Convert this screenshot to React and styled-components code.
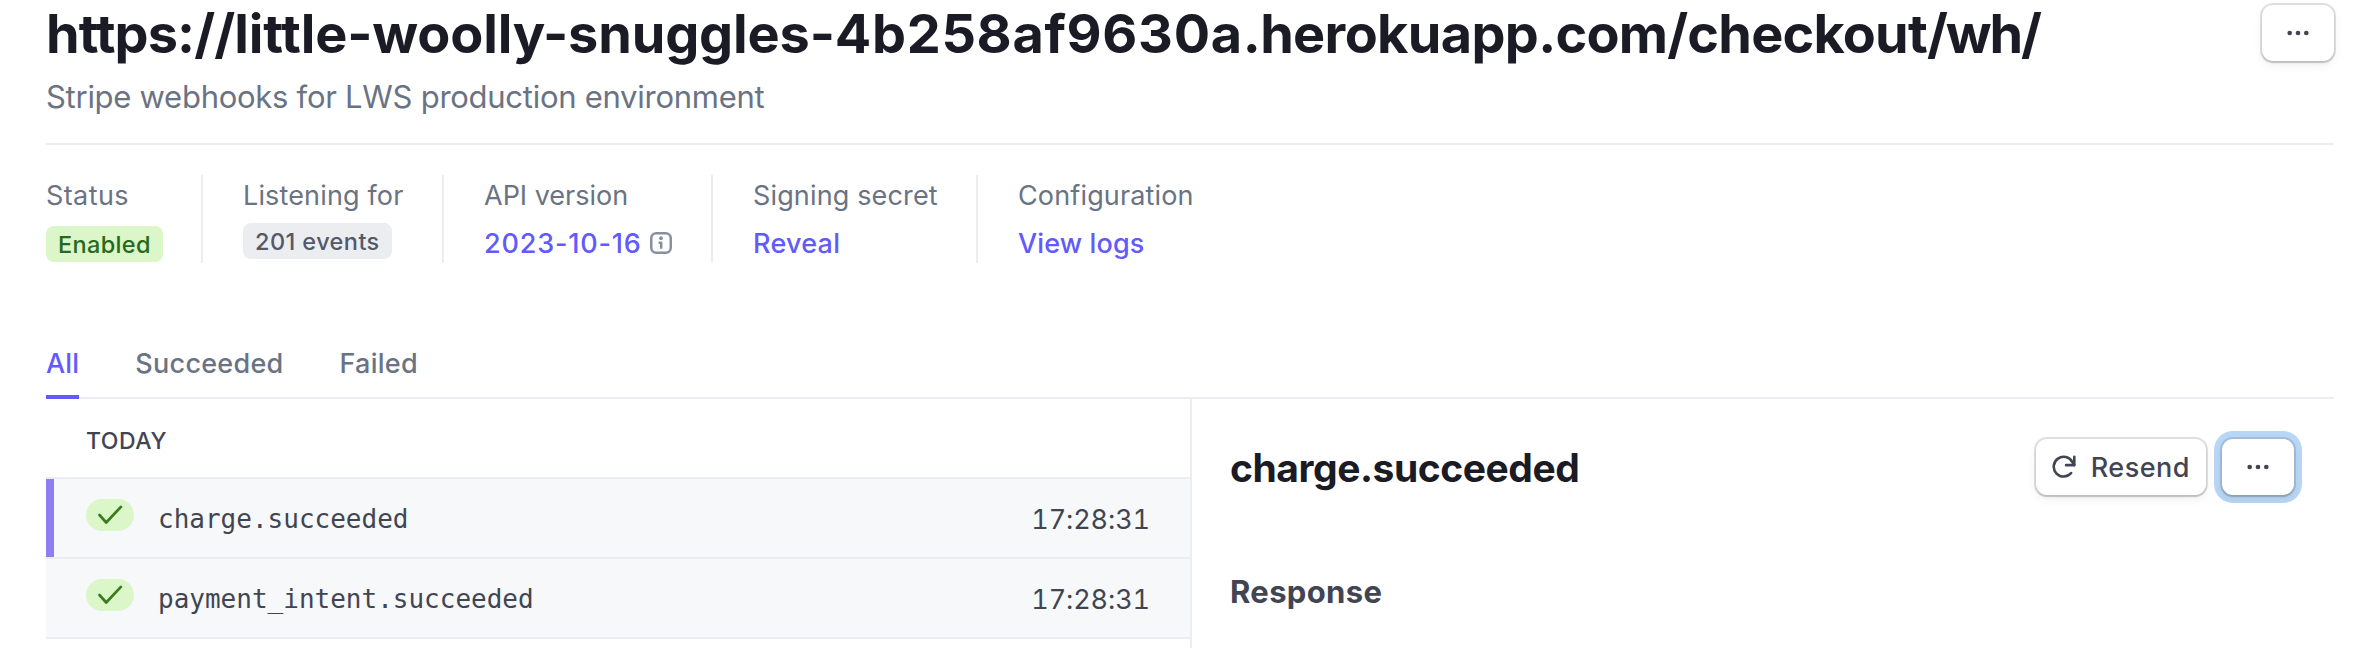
import React from "react";
import styled, { createGlobalStyle, css } from "styled-components";

const color = {
  title: "#1a1b25",
  text: "#414552",
  muted: "#6a7383",
  link: "#625afa",
  line: "#ebedf1",
  row: "#f6f8fa",
  green: "#dbf6c8",
};

const GlobalStyle = createGlobalStyle`
  * { box-sizing: border-box; }
  body {
    margin: 0;
    background: #fff;
    color: ${color.text};
    font-family: Inter, "Liberation Sans", sans-serif;
    -webkit-font-smoothing: antialiased;
  }
  h1, h2, h3, p { margin: 0; }
`;

const Page = styled.main`
  display: flex;
  flex-direction: column;
  height: 648px;
  padding: 0 42px 0 46px;
  overflow: hidden;
`;

const Header = styled.header`
  display: flex;
  align-items: center;
  justify-content: space-between;
  height: 66px;
`;

const Title = styled.h1`
  padding-top: 2px;
  color: ${color.title};
  font-size: 54px;
  font-weight: 700;
  line-height: 66px;
  white-space: nowrap;
`;

const UrlPart = styled.span`
  letter-spacing: ${(p) => p.$spacing}px;
`;

const Subtitle = styled.p`
  margin-top: 11px;
  color: ${color.muted};
  font-size: 31px;
  line-height: 40px;
  letter-spacing: -0.27px;
`;

const Button = styled.button`
  display: flex;
  align-items: center;
  justify-content: ${(p) => (p.$iconOnly ? "center" : "flex-start")};
  gap: 15px;
  width: ${(p) => (p.$iconOnly ? 72 : 170)}px;
  height: 56px;
  padding: 0 ${(p) => (p.$iconOnly ? 0 : 16)}px;
  border: 0;
  border-radius: 11px;
  background: #fff;
  color: ${color.text};
  font: 500 27px/40px Inter, "Liberation Sans", sans-serif;
  letter-spacing: 0.5px;
  box-shadow:
    0 2px 2px rgba(0, 0, 0, 0.12),
    0 0 0 2px rgba(64, 68, 82, 0.16),
    0 4px 10px rgba(64, 68, 82, 0.08)
    ${(p) => p.$focused && css`, 0 0 0 8px #b8d6f5`};
`;

const ButtonLabel = styled.span`
  padding-top: 2px;
`;

const Meta = styled.section`
  display: flex;
  margin-top: 26px;
  padding-top: 30px;
  border-top: 2px solid ${color.line};
`;

const MetaItem = styled.div`
  display: flex;
  flex-direction: column;
  align-items: flex-start;
  width: ${(p) => p.$width}px;
  height: 88px;
  margin-right: 40px;
  border-right: ${(p) => (p.$last ? "0" : `2px solid ${color.line}`)};
`;

const MetaLabel = styled.span`
  color: ${color.muted};
  font-size: 27px;
  line-height: 42px;
  letter-spacing: ${(p) => p.$spacing ?? 0.15}px;
  white-space: nowrap;
`;

const MetaValue = styled.div`
  display: flex;
  align-items: center;
  gap: 8px;
  height: 40px;
  margin-top: 6px;
`;

const Link = styled.a`
  padding-top: 2px;
  color: ${color.link};
  font-size: 27px;
  font-weight: 500;
  line-height: 40px;
  letter-spacing: ${(p) => p.$spacing ?? 0}px;
  white-space: nowrap;
`;

const Badge = styled.span`
  height: 36px;
  margin-top: ${(p) => (p.$success ? 9 : 6)}px;
  padding: 0 12px;
  border-radius: 8px;
  background: ${(p) => (p.$success ? color.green : "#ebedf1")};
  color: ${(p) => (p.$success ? "#28691a" : "#545969")};
  font-size: 23.5px;
  font-weight: 500;
  line-height: 38px;
  letter-spacing: ${(p) => (p.$success ? 0.35 : 0.42)}px;
  white-space: nowrap;
`;

const Tabs = styled.nav`
  display: flex;
  gap: 56px;
  height: 56px;
  margin-top: 80px;
  box-shadow: inset 0 -2px ${color.line};
`;

const Tab = styled.a`
  height: 56px;
  color: ${(p) => (p.$active ? color.link : color.muted)};
  border-bottom: ${(p) => (p.$active ? `4px solid ${color.link}` : "0")};
  font-size: 27px;
  font-weight: 500;
  line-height: 42px;
  letter-spacing: ${(p) => (p.$active ? 0.2 : 0.26)}px;
`;

const Panels = styled.div`
  display: flex;
  flex: 1;
`;

const EventList = styled.section`
  width: 1146px;
  border-right: 2px solid ${color.line};
`;

const Day = styled.div`
  display: flex;
  align-items: center;
  height: 80px;
  padding: 6px 40px 0;
  border-bottom: 2px solid ${color.line};
  font-size: 23px;
  font-weight: 500;
  line-height: 30px;
  letter-spacing: 0.55px;
`;

const EventRow = styled.div`
  display: flex;
  align-items: center;
  height: 80px;
  padding: 0 40px;
  background: ${color.row};
  border-bottom: 2px solid ${color.line};
  box-shadow: ${(p) => (p.$selected ? "inset 8px 0 #8d7ff3" : "none")};
`;

const CheckPill = styled.span`
  display: flex;
  width: 48px;
  height: 32px;
  margin: 0 24px 6px 0;
  border-radius: 16px;
  background: ${color.green};
`;

const EventName = styled.span`
  flex: 1;
  padding-top: 2px;
  font-family: "DejaVu Sans Mono", monospace;
  font-size: 26px;
  line-height: 40px;
`;

const EventTime = styled.time`
  padding-top: 4px;
  font-size: 27px;
  line-height: 40px;
  letter-spacing: -0.1px;
  font-feature-settings: "tnum";
`;

const Detail = styled.section`
  flex: 1;
  padding: 40px 40px 0 38px;
`;

const DetailHeader = styled.div`
  display: flex;
  align-items: center;
  justify-content: space-between;
  height: 56px;
`;

const DetailTitle = styled.h2`
  padding-top: 2px;
  color: ${color.title};
  font-size: 39px;
  font-weight: 700;
  line-height: 56px;
  letter-spacing: -0.45px;
`;

const Actions = styled.div`
  display: flex;
  gap: 16px;
`;

const SectionTitle = styled.h3`
  margin-top: 77px;
  font-size: 31px;
  font-weight: 700;
  line-height: 40px;
  letter-spacing: 0.35px;
`;

const Dots = () => (
  <svg width="22" height="6" viewBox="0 0 22 6" fill={color.text}>
    <circle cx="2.7" cy="3" r="2.35" />
    <circle cx="11" cy="3" r="2.35" />
    <circle cx="19.3" cy="3" r="2.35" />
  </svg>
);

const Refresh = () => (
  <svg width="24" height="24" viewBox="0 0 24 24" fill="none" stroke={color.text} strokeWidth="2.6" strokeLinecap="round" strokeLinejoin="round">
    <path d="M19.4 18.1A10 10 0 1 1 20.6 7L22.5 10" />
    <path d="M22.6 1.6V10.1H14.2" />
  </svg>
);

const Info = () => (
  <svg width="22" height="22" viewBox="0 0 22 22" fill="none" stroke="#87909f" strokeWidth="2.5">
    <rect x="1.25" y="1.25" width="19.5" height="19.5" rx="5" />
    <circle cx="11" cy="6.2" r="1.9" fill="#87909f" stroke="none" />
    <path d="M8.6 10.8H11.2V16.8" strokeLinejoin="round" />
  </svg>
);

const Check = () => (
  <svg width="48" height="32" viewBox="0 0 48 32" fill="none" stroke="#3a7d1c" strokeWidth="2.7" strokeLinecap="round" strokeLinejoin="round">
    <path d="M13.5 16L20.2 23.5L34.9 7.9" />
  </svg>
);

const url = [
  { text: "https://", spacing: -0.91 },
  { text: "little-woolly-snuggles-", spacing: -0.15 },
  { text: "4b258af9630a", spacing: 0.68 },
  { text: ".herokuapp", spacing: -0.66 },
  { text: ".com/checkout", spacing: -0.8 },
  { text: "/wh/", spacing: -2.1 },
];

const events = [
  { name: "charge.succeeded", time: "17:28:31", selected: true },
  { name: "payment_intent.succeeded", time: "17:28:31", selected: false },
];

export default function App() {
  return (
    <>
      <GlobalStyle />
      <Page>
        <Header>
          <Title>
            {url.map((part) => (
              <UrlPart key={part.text} $spacing={part.spacing}>{part.text}</UrlPart>
            ))}
          </Title>
          <Button $iconOnly aria-label="More"><Dots /></Button>
        </Header>
        <Subtitle>Stripe webhooks for LWS production environment</Subtitle>

        <Meta>
          <MetaItem $width={157}>
            <MetaLabel $spacing={0.4}>Status</MetaLabel>
            <Badge $success>Enabled</Badge>
          </MetaItem>
          <MetaItem $width={201}>
            <MetaLabel>Listening for</MetaLabel>
            <Badge>201 events</Badge>
          </MetaItem>
          <MetaItem $width={229}>
            <MetaLabel $spacing={0}>API version</MetaLabel>
            <MetaValue>
              <Link $spacing={0.82}>2023-10-16</Link>
              <Info />
            </MetaValue>
          </MetaItem>
          <MetaItem $width={225}>
            <MetaLabel>Signing secret</MetaLabel>
            <MetaValue><Link $spacing={0.25}>Reveal</Link></MetaValue>
          </MetaItem>
          <MetaItem $width={180} $last>
            <MetaLabel>Configuration</MetaLabel>
            <MetaValue><Link $spacing={0.12}>View logs</Link></MetaValue>
          </MetaItem>
        </Meta>

        <Tabs>
          <Tab $active>All</Tab>
          <Tab>Succeeded</Tab>
          <Tab>Failed</Tab>
        </Tabs>

        <Panels>
          <EventList>
            <Day>TODAY</Day>
            {events.map((e) => (
              <EventRow key={e.name} $selected={e.selected}>
                <CheckPill><Check /></CheckPill>
                <EventName>{e.name}</EventName>
                <EventTime>{e.time}</EventTime>
              </EventRow>
            ))}
          </EventList>
          <Detail>
            <DetailHeader>
              <DetailTitle>charge.succeeded</DetailTitle>
              <Actions>
                <Button><Refresh /><ButtonLabel>Resend</ButtonLabel></Button>
                <Button $iconOnly $focused aria-label="More"><Dots /></Button>
              </Actions>
            </DetailHeader>
            <SectionTitle>Response</SectionTitle>
          </Detail>
        </Panels>
      </Page>
    </>
  );
}
